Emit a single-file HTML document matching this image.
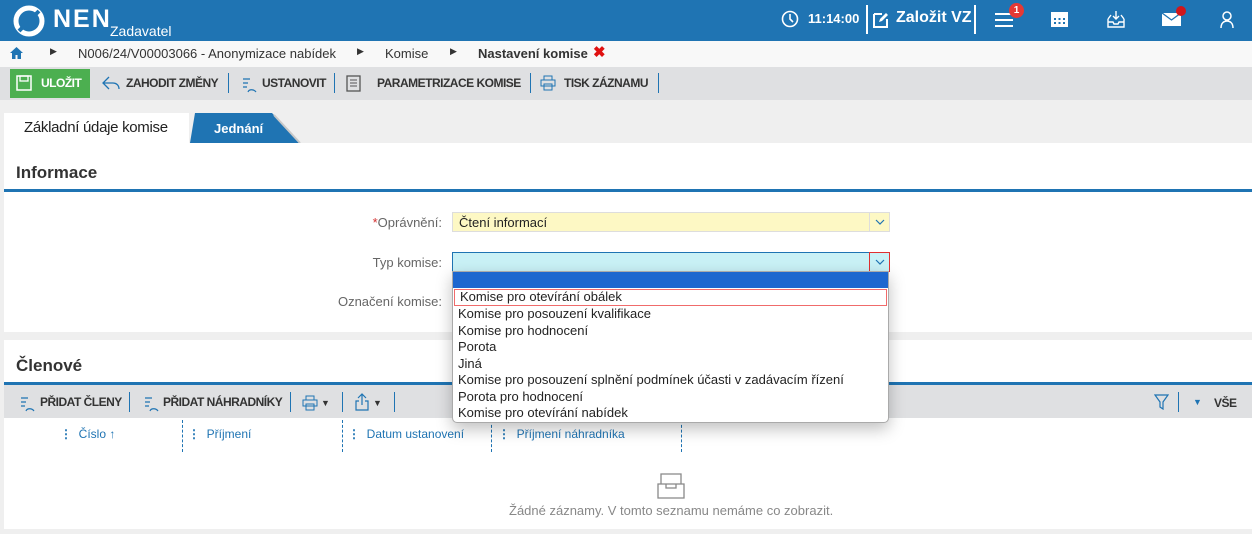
<!DOCTYPE html>
<html><head><meta charset="utf-8"><style>
*{box-sizing:border-box;margin:0;padding:0}
body{width:1252px;height:534px;overflow:hidden;background:#efefef;font-family:"Liberation Sans",Arial,sans-serif;font-size:13px;color:#333;position:relative}
.abs{position:absolute}
.hdr{left:0;top:0;width:1252px;height:41px;background:#1f74b3;color:#fff}
.bc{left:0;top:41px;width:1252px;height:26px;background:#f8f8f8;font-size:13px;color:#333}
.tb{left:0;top:67px;width:1252px;height:33px;background:#dfe0e2}
.tbi{font-weight:bold;font-size:12px;color:#333;top:9px;letter-spacing:-0.5px;white-space:nowrap}
.sep{width:1px;height:20px;background:#1f74b3;top:6px}
.lbl{color:#666;font-size:13px;text-align:right;width:150px}
.dd div{height:16.5px;line-height:16.5px;padding-left:5px;font-size:13px;color:#222}
.chev{position:absolute;width:20px;height:18px}
</style></head><body>
<div class="abs hdr">
 <svg class="abs" style="left:13px;top:5px" width="32" height="32" viewBox="0 0 32 32"><circle cx="16" cy="16" r="13" fill="none" stroke="#fff" stroke-width="5"/><path d="M6 26 L26 6" stroke="#1f74b3" stroke-width="4"/></svg>
 <div class="abs" style="left:53px;top:5px;font-size:25px;font-weight:bold;letter-spacing:2px">NEN</div>
 <div class="abs" style="left:110px;top:23px;font-size:14px">Zadavatel</div>
 <svg class="abs" style="left:781px;top:10px" width="18" height="18" viewBox="0 0 18 18"><circle cx="9" cy="9" r="7.5" fill="none" stroke="#fff" stroke-width="1.6"/><path d="M9 4v5l3 3" stroke="#fff" stroke-width="1.6" fill="none"/></svg>
 <div class="abs" style="left:808px;top:11px;font-size:13px;font-weight:bold">11:14:00</div>
 <div class="abs" style="left:866px;top:5px;width:2px;height:29px;background:#fff"></div>
 <svg class="abs" style="left:872px;top:11px" width="18" height="18" viewBox="0 0 18 18"><path d="M2 3h8M2 3v13h13V8" stroke="#fff" stroke-width="2" fill="none"/><path d="M7 11l1-3 6-6 2 2-6 6z" fill="#fff"/></svg>
 <div class="abs" style="left:896px;top:9px;font-size:16px;font-weight:bold">Založit VZ</div>
 <div class="abs" style="left:974px;top:5px;width:2px;height:29px;background:#fff"></div>
 <svg class="abs" style="left:995px;top:12px" width="20" height="16"><path d="M0 2h18M0 8h18M0 14h18" stroke="#fff" stroke-width="2"/></svg>
 <div class="abs" style="left:1009px;top:3px;width:15px;height:15px;border-radius:50%;background:#e53935;font-size:10px;font-weight:bold;text-align:center;line-height:15px">1</div>
 <svg class="abs" style="left:1051px;top:12px" width="17" height="15"><rect x="0" y="0" width="17" height="15" fill="#fff"/><g fill="#1f74b3"><rect x="3" y="6" width="2" height="2"/><rect x="7.5" y="6" width="2" height="2"/><rect x="12" y="6" width="2" height="2"/><rect x="3" y="10" width="2" height="2"/><rect x="7.5" y="10" width="2" height="2"/><rect x="12" y="10" width="2" height="2"/></g></svg>
 <svg class="abs" style="left:1107px;top:10px" width="18" height="18" viewBox="0 0 18 18"><path d="M1 9v8h16V9M1 9l3-4M17 9l-3-4M1 12h5l1 2h4l1-2h5M9 1v8M6 6l3 3 3-3" stroke="#fff" stroke-width="1.4" fill="none"/></svg>
 <svg class="abs" style="left:1162px;top:13px" width="19" height="13"><rect width="19" height="13" fill="#fff"/><path d="M0 0l9.5 7L19 0" stroke="#1f74b3" stroke-width="1.3" fill="none"/></svg>
 <div class="abs" style="left:1176px;top:6px;width:10px;height:10px;border-radius:50%;background:#d0161b"></div>
 <svg class="abs" style="left:1220px;top:11px" width="14" height="17"><circle cx="7" cy="5" r="4" fill="none" stroke="#fff" stroke-width="1.5"/><path d="M1 17c0-5 3-7 6-7s6 2 6 7" fill="none" stroke="#fff" stroke-width="1.5"/></svg>
</div>
<div class="abs bc">
 <svg class="abs" style="left:10px;top:6px" width="13" height="12"><path d="M6.5 0L0 6h2v6h3.5V8h2v4H11V6h2z" fill="#1f74b3"/></svg>
 <div class="abs" style="left:50px;top:5px;font-size:9px">&#9654;</div>
 <div class="abs" style="left:78px;top:5px">N006/24/V00003066 - Anonymizace nabídek</div>
 <div class="abs" style="left:357px;top:5px;font-size:9px">&#9654;</div>
 <div class="abs" style="left:385px;top:5px">Komise</div>
 <div class="abs" style="left:450px;top:5px;font-size:9px">&#9654;</div>
 <div class="abs" style="left:478px;top:5px;font-weight:bold">Nastavení komise</div>
 <div class="abs" style="left:593px;top:2px;color:#e01010;font-weight:bold;font-size:15px">✖</div>
</div>
<div class="abs tb">
 <div class="abs" style="left:10px;top:2px;width:80px;height:29px;background:#4caf50"></div>
 <svg class="abs" style="left:16px;top:8px" width="16" height="16"><rect x="1" y="1" width="14" height="14" fill="none" stroke="#fff" stroke-width="1.5"/><rect x="4" y="1" width="8" height="5" fill="none" stroke="#fff" stroke-width="1.3"/></svg>
 <div class="abs tbi" style="left:41px;color:#fff">ULOŽIT</div>
 <svg class="abs" style="left:102px;top:9px" width="18" height="14"><path d="M7 1L1 7l6 6M1 7h10c3 0 6 2 6 6" fill="none" stroke="#1f74b3" stroke-width="1.3"/></svg>
 <div class="abs tbi" style="left:126px">ZAHODIT ZMĚNY</div>
 <div class="abs sep" style="left:228px"></div>
 <svg class="abs" style="left:242px;top:10px" width="16" height="16"><path d="M1 2h7M1 6h5M1 10h4M6 15c1-3 6-3 8 0" fill="none" stroke="#1f74b3" stroke-width="1.2"/></svg>
 <div class="abs tbi" style="left:262px">USTANOVIT</div>
 <div class="abs sep" style="left:334px"></div>
 <svg class="abs" style="left:346px;top:8px" width="15" height="17"><rect x="1" y="1" width="13" height="15" fill="none" stroke="#555" stroke-width="1.3"/><path d="M4 5h7M4 8h7M4 11h7" stroke="#555"/></svg>
 <div class="abs tbi" style="left:377px">PARAMETRIZACE KOMISE</div>
 <div class="abs sep" style="left:530px"></div>
 <svg class="abs" style="left:540px;top:8px" width="16" height="16"><rect x="4" y="1" width="8" height="4" fill="none" stroke="#1f74b3"/><rect x="1" y="5" width="14" height="6" fill="none" stroke="#1f74b3"/><rect x="4" y="9" width="8" height="6" fill="none" stroke="#1f74b3"/></svg>
 <div class="abs tbi" style="left:564px">TISK ZÁZNAMU</div>
 <div class="abs sep" style="left:658px"></div>
</div>
<div class="abs" style="left:4px;top:113px;width:185px;height:30px;background:#fff"></div>
<div class="abs" style="left:24px;top:119px;font-size:15px;color:#222;letter-spacing:-0.3px">Základní údaje komise</div>
<svg class="abs" style="left:190px;top:113px" width="112" height="30"><path d="M0 30L5 0H82L110 30Z" fill="#1f74b3"/><path d="M84 2L110 30" stroke="#c8c8c8" stroke-width="2"/></svg>
<div class="abs" style="left:214px;top:121px;font-size:13px;font-weight:bold;color:#fff">Jednání</div>
<div class="abs" style="left:4px;top:143px;width:1248px;height:189px;background:#fff"></div>
<div class="abs" style="left:16px;top:163px;font-size:17px;font-weight:bold;color:#333">Informace</div>
<div class="abs" style="left:4px;top:189px;width:1248px;height:3px;background:#1f74b3"></div>
<div class="abs lbl" style="left:292px;top:215px"><span style="color:#d32f2f">*</span>Oprávnění:</div>
<div class="abs" style="left:452px;top:212px;width:438px;height:20px;background:#fdf8c4;border:1px solid #ddd;padding:2px 6px;font-size:13px;color:#222">Čtení informací</div>
<div class="abs" style="left:869px;top:213px;width:20px;height:18px;border-left:1px solid #ddd"><svg class="chev" viewBox="0 0 20 18"><path d="M6 7l4 4 4-4" fill="none" stroke="#1f74b3" stroke-width="1.2"/></svg></div>
<div class="abs lbl" style="left:292px;top:255px">Typ komise:</div>
<div class="abs" style="left:452px;top:252px;width:438px;height:20px;background:#c9f1f6;border:1px solid #1f74b3"></div>
<div class="abs" style="left:869px;top:252px;width:21px;height:20px;border:1px solid #e03030"><svg class="chev" viewBox="0 0 20 18"><path d="M6 7l4 4 4-4" fill="none" stroke="#1f74b3" stroke-width="1.2"/></svg></div>
<div class="abs lbl" style="left:292px;top:294px">Označení komise:</div>
<div class="abs" style="left:4px;top:340px;width:1248px;height:194px;background:#fff"></div>
<div class="abs" style="left:16px;top:356px;font-size:17px;font-weight:bold;color:#333">Členové</div>
<div class="abs" style="left:4px;top:382px;width:1248px;height:3px;background:#1f74b3"></div>
<div class="abs" style="left:4px;top:385px;width:1248px;height:33px;background:#dfe0e2"></div>
<svg class="abs" style="left:20px;top:396px" width="16" height="16"><path d="M1 2h7M1 6h5M1 10h4M6 15c1-3 6-3 8 0" fill="none" stroke="#1f74b3" stroke-width="1.2"/></svg>
<div class="abs tbi" style="left:40px;top:395px">PŘIDAT ČLENY</div>
<div class="abs sep" style="left:129px;top:392px"></div>
<svg class="abs" style="left:144px;top:396px" width="16" height="16"><path d="M1 2h7M1 6h5M1 10h4M6 15c1-3 6-3 8 0" fill="none" stroke="#1f74b3" stroke-width="1.2"/></svg>
<div class="abs tbi" style="left:163px;top:395px">PŘIDAT NÁHRADNÍKY</div>
<div class="abs sep" style="left:290px;top:392px"></div>
<svg class="abs" style="left:302px;top:395px" width="16" height="16"><rect x="4" y="1" width="8" height="4" fill="none" stroke="#1f74b3"/><rect x="1" y="5" width="14" height="6" fill="none" stroke="#1f74b3"/><rect x="4" y="9" width="8" height="6" fill="none" stroke="#1f74b3"/></svg>
<div class="abs" style="left:321px;top:398px;font-size:9px">▼</div>
<div class="abs sep" style="left:342px;top:392px"></div>
<svg class="abs" style="left:354px;top:393px" width="16" height="18"><path d="M8 1v11M4 5l4-4 4 4M5 8H2v9h12V8h-3" fill="none" stroke="#1f74b3" stroke-width="1.2"/></svg>
<div class="abs" style="left:373px;top:398px;font-size:9px">▼</div>
<div class="abs sep" style="left:394px;top:392px"></div>
<svg class="abs" style="left:1154px;top:394px" width="15" height="16"><path d="M1 1h13L9 8v7l-3-2V8z" fill="none" stroke="#1f74b3" stroke-width="1.2"/></svg>
<div class="abs sep" style="left:1178px;top:392px"></div>
<div class="abs" style="left:1193px;top:397px;font-size:9px;color:#1f74b3">▼</div>
<div class="abs tbi" style="left:1214px;top:396px">VŠE</div>
<div class="abs" style="left:182px;top:420px;height:32px;border-left:1px dashed #1f74b3"></div>
<div class="abs" style="left:342px;top:420px;height:32px;border-left:1px dashed #1f74b3"></div>
<div class="abs" style="left:491px;top:420px;height:32px;border-left:1px dashed #1f74b3"></div>
<div class="abs" style="left:681px;top:420px;height:32px;border-left:1px dashed #1f74b3"></div>
<div class="abs" style="left:60px;top:427px;color:#1f74b3;font-size:12px"><b>⋮</b> &nbsp;Číslo ↑</div>
<div class="abs" style="left:188px;top:427px;color:#1f74b3;font-size:12px"><b>⋮</b> &nbsp;Příjmení</div>
<div class="abs" style="left:348px;top:427px;color:#1f74b3;font-size:12px"><b>⋮</b> &nbsp;Datum ustanovení</div>
<div class="abs" style="left:498px;top:427px;color:#1f74b3;font-size:12px"><b>⋮</b> &nbsp;Příjmení náhradníka</div>
<svg class="abs" style="left:657px;top:473px" width="28" height="26"><path d="M4 1h20v10H4zM1 11h8v4h10v-4h8v14H1z" fill="none" stroke="#888" stroke-width="1.3"/></svg>
<div class="abs" style="left:509px;top:503px;font-size:13px;color:#888">Žádné záznamy. V tomto seznamu nemáme co zobrazit.</div>
<div class="abs" style="left:0;top:529px;width:1252px;height:5px;background:#efefef"></div>
<div class="abs" style="left:452px;top:271px;width:437px;height:152px;background:#fff;border:1px solid #aaa;border-radius:0 0 5px 5px;box-shadow:0 6px 16px rgba(0,0,0,.25);overflow:hidden">
 <div style="height:16px;background:#1d67cf"></div>
 <div class="dd" style="padding-top:1px">
  <div style="border:1.5px solid #f06b6b;height:17px;line-height:14px;margin:0 1px">Komise pro otevírání obálek</div>
  <div>Komise pro posouzení kvalifikace</div>
  <div>Komise pro hodnocení</div>
  <div>Porota</div>
  <div>Jiná</div>
  <div>Komise pro posouzení splnění podmínek účasti v zadávacím řízení</div>
  <div>Porota pro hodnocení</div>
  <div>Komise pro otevírání nabídek</div>
 </div>
</div>
</body></html>
